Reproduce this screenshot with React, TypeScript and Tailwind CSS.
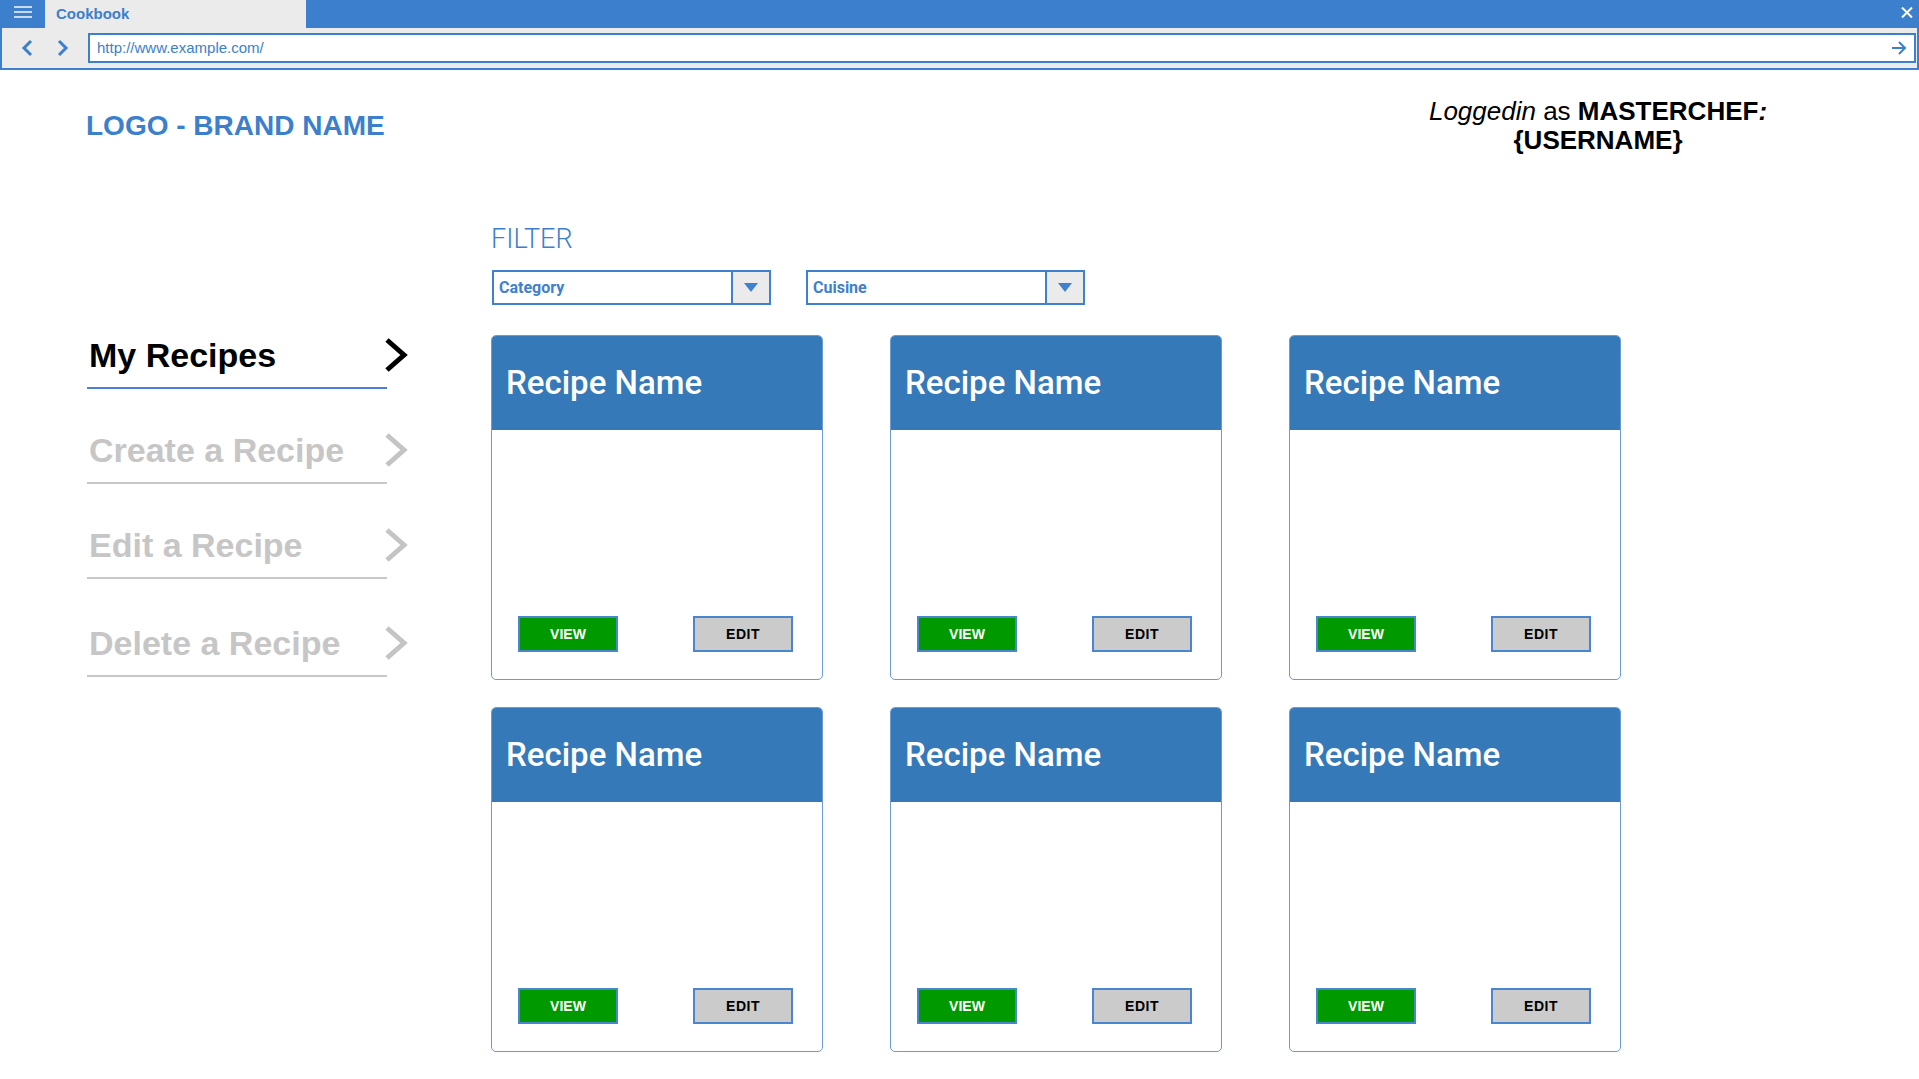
import React from 'react';

function NavChevron({ color }: { color: string }) {
  return (
    <svg width="26" height="36" viewBox="0 0 26 36" className="-ml-[4px] mt-[1px] shrink-0">
      <polyline points="4,3 21,18 4,33" fill="none" stroke={color} strokeWidth="5" />
    </svg>
  );
}

function NavItem({ label, active, spacing }: { label: string; active?: boolean; spacing: string }) {
  return (
    <div className={`flex items-start ${spacing}`}>
      <div
        className={
          active
            ? 'w-[300px] border-b-2 border-[#4a7fe0] pl-[2px] pb-[13px] text-[34px] leading-[38px] font-bold text-black'
            : 'w-[300px] border-b-2 border-[#c8c8c8] pl-[2px] pb-[13px] text-[34px] leading-[38px] font-bold text-[#c6c6c6]'
        }
      >
        {label}
      </div>
      <NavChevron color={active ? '#000000' : '#c4c4c4'} />
    </div>
  );
}

function Dropdown({ label }: { label: string }) {
  return (
    <div className="w-[279px] h-[35px] border-2 border-[#3f80cf] bg-white flex">
      <div className="flex-1 flex items-center pl-[5px] font-['Roboto',sans-serif] font-bold text-[16px] text-[#3f80cf]">
        {label}
      </div>
      <div className="w-[38px] border-l-2 border-[#3f80cf] bg-[#ebebeb] flex items-center justify-center">
        <svg width="14" height="9" viewBox="0 0 14 9">
          <polygon points="0,0 14,0 7,9" fill="#3f80cf" />
        </svg>
      </div>
    </div>
  );
}

function RecipeCard() {
  return (
    <div className="w-[332px] h-[345px] border border-[#6b9bd2] rounded-[5px] overflow-hidden bg-white flex flex-col">
      <div className="h-[94px] shrink-0 bg-[#3679b8] pl-[14px] pt-[28px]">
        <h2 className="font-['Roboto',sans-serif] font-medium text-[33px] leading-[38px] text-white">Recipe Name</h2>
      </div>
      <div className="flex-1 flex items-end justify-between pl-[26px] pr-[29px] pb-[27px]">
        <button className="w-[100px] h-[36px] border-2 border-[#4a86d0] bg-[#009900] text-white text-[14px] font-bold">
          VIEW
        </button>
        <button className="w-[100px] h-[36px] border-2 border-[#4a86d0] bg-[#cbcbcb] text-black text-[14px] font-bold tracking-[0.5px]">
          EDIT
        </button>
      </div>
    </div>
  );
}

export default function App() {
  return (
    <div className="w-[1919px] h-[1079px] overflow-hidden bg-white font-['Liberation_Sans',Arial,sans-serif]">
      {/* Browser chrome */}
      <div className="h-[70px] flex flex-col">
        <div className="h-[28px] bg-[#3c7fcc] flex">
          <div className="w-[45px] flex flex-col items-center pt-[6px] gap-[3px]">
            <div className="w-[18px] h-[2px] bg-[#c9daf0]" />
            <div className="w-[18px] h-[2px] bg-[#c9daf0]" />
            <div className="w-[18px] h-[2px] bg-[#c9daf0]" />
          </div>
          <div className="w-[261px] bg-[#ebebeb] flex items-center pl-[11px] text-[15px] font-bold text-[#3c7fcc]">
            Cookbook
          </div>
          <div className="flex-1" />
          <div className="flex items-center pr-[6px] pb-[4px]">
            <svg width="12" height="11" viewBox="0 0 12 11">
              <path d="M1 0.5 L11 10.5 M11 0.5 L1 10.5" stroke="#ffffff" strokeWidth="2" />
            </svg>
          </div>
        </div>
        <div className="h-[42px] bg-[#ebebeb] border-x-2 border-b-2 border-[#3c7fcc] flex items-center">
          <svg width="14" height="18" viewBox="0 0 14 18" className="ml-[18px]">
            <polyline points="11,2 4,9 11,16" fill="none" stroke="#3c7fcc" strokeWidth="3" />
          </svg>
          <svg width="14" height="18" viewBox="0 0 14 18" className="ml-[22px]">
            <polyline points="3,2 10,9 3,16" fill="none" stroke="#3c7fcc" strokeWidth="3" />
          </svg>
          <div className="flex-1 ml-[18px] mr-[1px] h-[30px] border-2 border-[#3c7fcc] bg-white flex items-center justify-between pl-[7px] pr-[7px]">
            <span className="text-[15px] text-[#3c7fcc]">http://www.example.com/</span>
            <svg width="16" height="14" viewBox="0 0 16 14">
              <path d="M1 7 H14 M8 1 L14 7 L8 13" fill="none" stroke="#3c7fcc" strokeWidth="2" />
            </svg>
          </div>
        </div>
      </div>

      {/* Header */}
      <div className="h-[155px] flex justify-between items-start pl-[86px] pr-[131px]">
        <div className="mt-[40px] text-[28px] leading-[32px] font-bold text-[#3c7fcc]">LOGO - BRAND NAME</div>
        <div className="mt-[27px] w-[380px] text-center text-[26px] leading-[29px] text-black">
          <div>
            <i>Loggedin</i> as <b>MASTERCHEF</b>
            <b>
              <i>:</i>
            </b>
          </div>
          <div className="font-bold">{'{USERNAME}'}</div>
        </div>
      </div>

      {/* Main */}
      <div className="flex pl-[87px]">
        <div className="w-[403px] pt-[111px]">
          <NavItem label="My Recipes" active spacing="" />
          <NavItem label="Create a Recipe" spacing="mt-[42px]" />
          <NavItem label="Edit a Recipe" spacing="mt-[42px]" />
          <NavItem label="Delete a Recipe" spacing="mt-[45px]" />
        </div>
        <div className="flex flex-col">
          <div className="font-['Roboto',sans-serif] font-light text-[27px] leading-[30px] text-[#3c7fcc] pl-[1px] -mt-[1px]">
            FILTER
          </div>
          <div className="mt-[16px] flex gap-[35px] pl-[2px]">
            <Dropdown label="Category" />
            <Dropdown label="Cuisine" />
          </div>
          <div className="mt-[30px] ml-[1px] grid grid-cols-[332px_332px_332px] gap-x-[67px] gap-y-[27px]">
            <RecipeCard />
            <RecipeCard />
            <RecipeCard />
            <RecipeCard />
            <RecipeCard />
            <RecipeCard />
          </div>
        </div>
      </div>
    </div>
  );
}
